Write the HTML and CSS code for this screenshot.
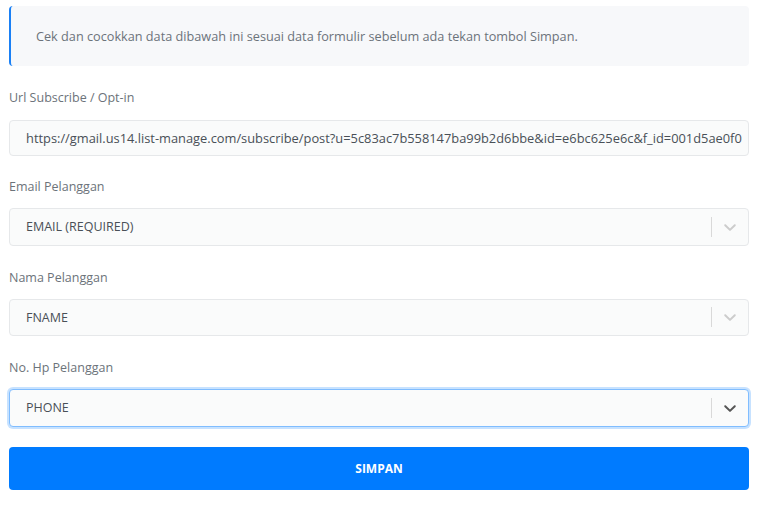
FILE: index.html
```html
<!DOCTYPE html>
<html lang="id">
<head>
<meta charset="utf-8">
<title>Form</title>
<link rel="stylesheet" href="styles.css">
</head>
<body>
<div class="page">
  <div class="alert">Cek dan cocokkan data dibawah ini sesuai data formulir sebelum ada tekan tombol Simpan.</div>

  <div class="field first">
    <label class="label">Url Subscribe / Opt-in</label>
    <div class="input">https://gmail.us14.list-manage.com/subscribe/post?u=5c83ac7b558147ba99b2d6bbe&amp;id=e6bc625e6c&amp;f_id=001d5ae0f0</div>
  </div>

  <div class="field after-input">
    <label class="label sel">Email Pelanggan</label>
    <div class="select">
      <span class="value">EMAIL (REQUIRED)</span>
      <span class="sep"></span>
      <span class="chev"><svg width="20" height="20" viewBox="0 0 20 20"><path d="M4.5 7.6c.4-.4 1-.4 1.4 0L10 11.5l4.1-3.9c.4-.4 1-.4 1.4 0 .4.4.4 1 0 1.4l-4.8 4.6c-.4.4-1 .4-1.4 0L4.5 9c-.4-.4-.4-1 0-1.4z" fill="currentColor"/></svg></span>
    </div>
  </div>

  <div class="field">
    <label class="label sel">Nama Pelanggan</label>
    <div class="select">
      <span class="value">FNAME</span>
      <span class="sep"></span>
      <span class="chev"><svg width="20" height="20" viewBox="0 0 20 20"><path d="M4.5 7.6c.4-.4 1-.4 1.4 0L10 11.5l4.1-3.9c.4-.4 1-.4 1.4 0 .4.4.4 1 0 1.4l-4.8 4.6c-.4.4-1 .4-1.4 0L4.5 9c-.4-.4-.4-1 0-1.4z" fill="currentColor"/></svg></span>
    </div>
  </div>

  <div class="field">
    <label class="label sel">No. Hp Pelanggan</label>
    <div class="select focused">
      <span class="value">PHONE</span>
      <span class="sep"></span>
      <span class="chev"><svg width="20" height="20" viewBox="0 0 20 20"><path d="M4.5 7.6c.4-.4 1-.4 1.4 0L10 11.5l4.1-3.9c.4-.4 1-.4 1.4 0 .4.4.4 1 0 1.4l-4.8 4.6c-.4.4-1 .4-1.4 0L4.5 9c-.4-.4-.4-1 0-1.4z" fill="currentColor"/></svg></span>
    </div>
  </div>

  <button class="btn">SIMPAN</button>
</div>
</body>
</html>
```
FILE: styles.css
```css
* { box-sizing: border-box; }
html, body { margin: 0; padding: 0; background: #fff; }
body {
  font-family: "Open Sans", "Noto Sans", sans-serif;
  font-size: 12.5px;
  color: #495057;
}
.page {
  padding: 6px 18px 0 9px;
  display: flex;
  flex-direction: column;
}
.alert {
  height: 60px;
  background: #f7f8fa;
  border-left: 2px solid #1a80f5;
  border-radius: 4px;
  padding: 0 0 0 25px;
  display: flex;
  align-items: center;
  color: #6c737a;
  font-size: 12.7px;
}
.field {
  margin-top: 22px;
  display: flex;
  flex-direction: column;
}
.field.after-input { margin-top: 21px; }
.label {
  line-height: 20px;
  height: 20px;
  margin-bottom: 12px;
  color: #6c737a;
}
.label.sel { margin-bottom: 11px; }
.input {
  height: 36px;
  border: 1px solid #e6e8ea;
  border-radius: 4px;
  background: #fafbfb;
  padding: 0 16px;
  display: flex;
  align-items: center;
  white-space: nowrap;
  overflow: hidden;
  color: #495057;
  font-size: 12.85px;
}
.select {
  height: 37.5px;
  border: 1px solid #e6e8ea;
  border-radius: 4px;
  background: #fafbfb;
  display: flex;
  align-items: center;
  padding-left: 16px;
}
.select .value { flex: 1; color: #495057; }
.select .sep {
  width: 1px;
  height: 20px;
  background: #d9d9d9;
}
.select .chev {
  width: 36px;
  display: flex;
  justify-content: center;
  color: #cccccc;
}
.select.focused {
  border-color: #80bdff;
  box-shadow: 0 0 0 2px rgba(0, 123, 255, 0.22);
}
.select.focused .chev { color: #555; }
.btn {
  margin-top: 20.5px;
  height: 43px;
  border: 0;
  border-radius: 4px;
  background: #007bff;
  color: #fff;
  font-family: "Open Sans", "Noto Sans", sans-serif;
  font-weight: 700;
  font-size: 12px;
}
```
